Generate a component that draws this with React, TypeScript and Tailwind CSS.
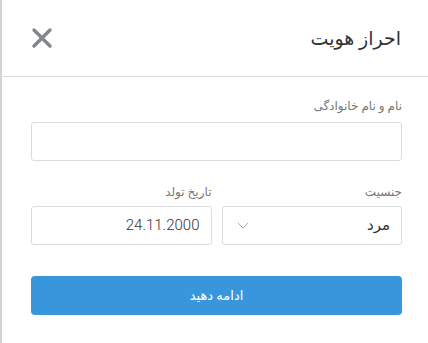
import React from "react";

export default function App() {
  return (
    <div
      className="w-[428px] h-[343px] bg-white border-l-2 border-[#d4d4d4] overflow-hidden"
      style={{ fontFamily: 'Roboto, "DejaVu Sans", sans-serif' }}
      dir="rtl"
    >
      <div className="h-[77px] flex items-center justify-between pr-[27px] pl-[29px] border-b border-[#dcdcdc]">
        <div className="text-[19px] text-[#333] leading-none">احراز هویت</div>
        <svg width="22" height="22" viewBox="0 0 22 22" className="mt-[-1px]">
          <path d="M3 3 L19 19 M19 3 L3 19" stroke="#81868f" strokeWidth="3.4" strokeLinecap="round" />
        </svg>
      </div>
      <div className="pr-[26px] pl-[29px] pt-[19px]">
        <div className="text-[12px] text-[#777] h-[20px] leading-[20px]">نام و نام خانوادگی</div>
        <div className="mt-[6px] h-[39px] border border-[#dcdcdc] rounded-[3px]" />
        <div className="mt-[21px] flex gap-[10px]">
          <div className="flex-1">
            <div className="text-[12px] text-[#777] h-[20px] leading-[20px]">جنسیت</div>
            <div className="mt-[4px] h-[39px] border border-[#dcdcdc] rounded-[3px] flex items-center justify-between pr-[11px] pl-[14px]">
              <span className="text-[15px] text-[#333]">مرد</span>
              <svg width="12" height="8" viewBox="0 0 12 8">
                <path d="M1 1 L6 6 L11 1" stroke="#aaa" strokeWidth="1" fill="none" />
              </svg>
            </div>
          </div>
          <div className="flex-1">
            <div className="text-[12px] text-[#777] h-[20px] leading-[20px]">تاریخ تولد</div>
            <div className="mt-[4px] h-[39px] border border-[#dcdcdc] rounded-[3px] flex items-center pr-[11px]">
              <span className="text-[15px] font-light text-[#333]" dir="ltr">24.11.2000</span>
            </div>
          </div>
        </div>
        <button className="mt-[31px] w-full h-[39px] rounded-[4px] bg-[#3897dc] text-white text-[13px]">
          ادامه دهید
        </button>
      </div>
    </div>
  );
}
